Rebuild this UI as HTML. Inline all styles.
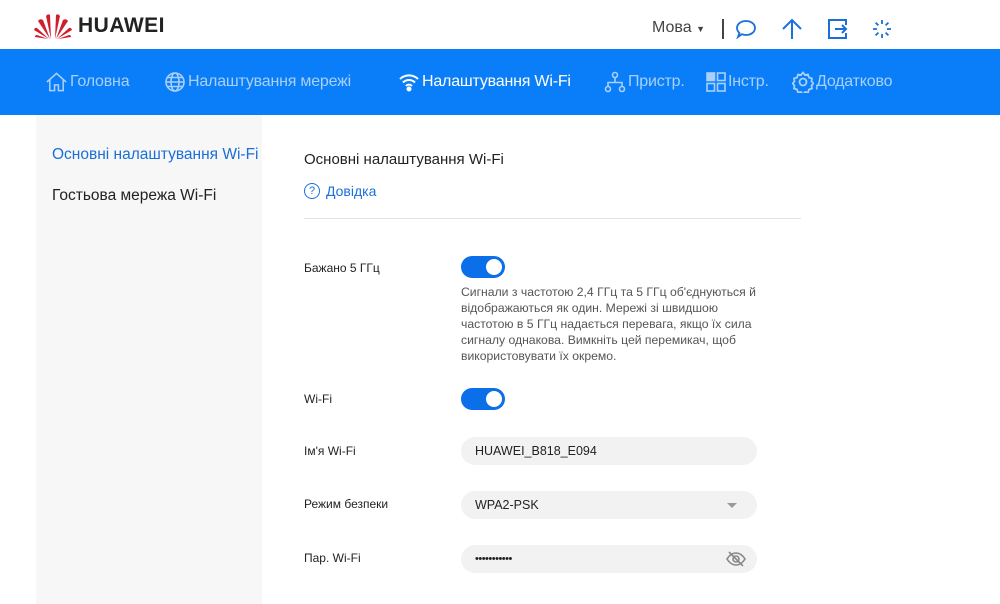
<!DOCTYPE html>
<html><head><meta charset="utf-8"><style>
*{margin:0;padding:0;box-sizing:border-box}
body{width:1000px;height:604px;overflow:hidden;background:#fff;font-family:"Liberation Sans","DejaVu Sans",sans-serif;position:relative}
.a{position:absolute}
.nav{top:49px;left:0;width:1000px;height:66px;background:#0a7ef8}
.nav .it{position:absolute;top:0;height:66px;line-height:66px;font-size:16px;letter-spacing:-0.2px;color:#a9d0fb;display:flex;align-items:center;gap:2px}
.nav .it.on{color:#fff}
.side{top:115px;left:36px;width:226px;height:489px;background:#f7f7f7}
.lbl{font-size:12px;color:#222;left:304px}
.tg{width:44px;height:22px;border-radius:11px;background:#0a6fe8;left:461px}
.tg:after{content:"";position:absolute;right:3px;top:3px;width:16px;height:16px;border-radius:50%;background:#fff}
.inp{left:461px;width:296px;height:28px;border-radius:14px;background:#f2f2f2;font-size:12.5px;color:#222;line-height:28px;padding-left:14px}
</style></head><body>
<svg class="a" style="left:34px;top:12px" width="38" height="28" viewBox="0 0 38 28">
<g fill="#cf1f2e">
<path d="M17 27 L12 4 Q14 1 16 3 Z"/><path d="M21 27 L26 4 Q24 1 22 3 Z"/>
<path d="M16 27 L4 9 Q6 6 9 8 Z"/><path d="M22 27 L34 9 Q32 6 29 8 Z"/>
<path d="M15 27 L0 18 Q1 15 3 16 Z"/><path d="M23 27 L38 18 Q37 15 35 16 Z"/>
<path d="M14 27 L1 25 Q1 23 3 23 Z"/><path d="M24 27 L37 25 Q37 23 35 23 Z"/>
</g></svg>
<div class="a" style="left:78px;top:14px;font-size:21px;font-weight:bold;color:#222;letter-spacing:0.5px">HUAWEI</div>
<div class="a" style="left:652px;top:19px;font-size:16px;color:#444">Мова <span style="font-size:9px">▼</span></div>
<div class="a" style="left:722px;top:19px;width:1.5px;height:20px;background:#444"></div>
<svg class="a" style="left:734px;top:17px" width="24" height="24" viewBox="0 0 24 24" fill="none" stroke="#1a6fd8" stroke-width="1.8"><path d="M12 4c5 0 9 3 9 7s-4 7-9 7c-1.5 0-3-.3-4-.8L4 20l1.5-4C4 14.7 3 13 3 11c0-4 4-7 9-7z"/></svg>
<svg class="a" style="left:780px;top:17px" width="24" height="24" viewBox="0 0 24 24" fill="none" stroke="#1a6fd8" stroke-width="2"><path d="M12 22V3M3 12l9-9 9 9"/></svg>
<svg class="a" style="left:826px;top:17px" width="24" height="24" viewBox="0 0 24 24" fill="none" stroke="#1a6fd8" stroke-width="2"><path d="M14 3H3v18h11M14 3h6v5M20 16v5h-6M9 12h11M16 8l4 4-4 4"/></svg>
<svg class="a" style="left:871px;top:18px" width="22" height="22" viewBox="0 0 22 22" stroke="#1a6fd8" stroke-width="1.8"><path d="M11 2v4M11 16v4M2 11h4M16 11h4M4.6 4.6l2.8 2.8M14.6 14.6l2.8 2.8M4.6 17.4l2.8-2.8M14.6 7.4l2.8-2.8"/></svg>
<div class="a nav">
<div class="it" style="left:45px"><svg width="23" height="22" viewBox="0 0 24 22" fill="none" stroke="#a9d0fb" stroke-width="1.6"><path d="M2 11L12 2l10 9M5 9v11h5v-6h4v6h5V9"/></svg>Головна</div>
<div class="it" style="left:164px"><svg width="22" height="22" viewBox="0 0 22 22" fill="none" stroke="#a9d0fb" stroke-width="1.6"><circle cx="11" cy="11" r="9"/><ellipse cx="11" cy="11" rx="4" ry="9"/><path d="M2 11h18M3.5 6.5h15M3.5 15.5h15"/></svg>Налаштування мережі</div>
<div class="it on" style="left:398px"><svg width="22" height="20" viewBox="0 0 22 20" fill="none" stroke="#fff" stroke-width="2"><path d="M2 7a13 13 0 0118 0M5 10.5a8.5 8.5 0 0112 0M8 14a4 4 0 016 0"/><circle cx="11" cy="17" r="1.5" fill="#fff"/></svg>Налаштування Wi-Fi</div>
<div class="it" style="left:604px"><svg width="22" height="22" viewBox="0 0 22 22" fill="none" stroke="#a9d0fb" stroke-width="1.6"><circle cx="11" cy="4" r="2.5"/><circle cx="4" cy="18" r="2.5"/><circle cx="18" cy="18" r="2.5"/><path d="M11 6.5v5M4 15.5v-4h14v4"/></svg>Пристр.</div>
<div class="it" style="left:706px"><svg width="20" height="20" viewBox="0 0 20 20" fill="none" stroke="#a9d0fb" stroke-width="1.6"><rect x="1" y="1" width="7.5" height="7.5" fill="#a9d0fb"/><rect x="11.5" y="1" width="7.5" height="7.5"/><rect x="1" y="11.5" width="7.5" height="7.5"/><rect x="11.5" y="11.5" width="7.5" height="7.5"/></svg>Інстр.</div>
<div class="it" style="left:792px"><svg width="22" height="22" viewBox="0 0 22 22" fill="none" stroke="#a9d0fb" stroke-width="1.8"><path d="M11 1.5l2 2.5 3-.5 1 3 3 1-.5 3 2 2-2 2 .5 3-3 1-1 3-3-.5-2 2.5-2-2.5-3 .5-1-3-3-1 .5-3-2-2 2-2-.5-3 3-1 1-3 3 .5z"/><circle cx="11" cy="11" r="3.5"/></svg>Додатково</div>
</div>
<div class="a side"></div>
<div class="a" style="left:52px;top:146px;font-size:15.5px;color:#1a6fd8">Основні налаштування Wi-Fi</div>
<div class="a" style="left:52px;top:187px;font-size:15.5px;color:#222">Гостьова мережа Wi-Fi</div>
<div class="a" style="left:304px;top:151px;font-size:15px;color:#222">Основні налаштування Wi-Fi</div>
<div class="a" style="left:304px;top:183px;width:16px;height:16px;border:1.3px solid #1a6fd8;border-radius:50%;font-size:11px;color:#1a6fd8;text-align:center;line-height:14px">?</div>
<div class="a" style="left:326px;top:183px;font-size:14px;color:#1a6fd8">Довідка</div>
<div class="a" style="left:304px;top:218px;width:497px;height:1px;background:#e3e3e3"></div>
<div class="a lbl" style="top:261px">Бажано 5 ГГц</div>
<div class="a tg" style="top:256px"></div>
<div class="a" style="left:461px;top:284px;width:310px;font-size:12.2px;line-height:16px;color:#555">Сигнали з частотою 2,4 ГГц та 5 ГГц об'єднуються й відображаються як один. Мережі зі швидшою частотою в 5 ГГц надається перевага, якщо їх сила сигналу однакова. Вимкніть цей перемикач, щоб використовувати їх окремо.</div>
<div class="a lbl" style="top:392px">Wi-Fi</div>
<div class="a tg" style="top:388px"></div>
<div class="a lbl" style="top:444px">Ім'я Wi-Fi</div>
<div class="a inp" style="top:437px">HUAWEI_B818_E094</div>
<div class="a lbl" style="top:497px">Режим безпеки</div>
<div class="a inp" style="top:491px">WPA2-PSK</div>
<div class="a" style="left:727px;top:503px;width:0;height:0;border-left:5px solid transparent;border-right:5px solid transparent;border-top:5px solid #999"></div>
<div class="a lbl" style="top:551px">Пар. Wi-Fi</div>
<div class="a inp" style="top:545px;font-size:11px;letter-spacing:-0.5px">•••••••••••</div>
<svg class="a" style="left:726px;top:550px" width="20" height="18" viewBox="0 0 20 18" fill="none" stroke="#888" stroke-width="1.6"><path d="M1 9c2.5-4 5.5-6 9-6s6.5 2 9 6c-2.5 4-5.5 6-9 6s-6.5-2-9-6z"/><circle cx="10" cy="9" r="3"/><path d="M3 2l14 14"/></svg>
</body></html>
